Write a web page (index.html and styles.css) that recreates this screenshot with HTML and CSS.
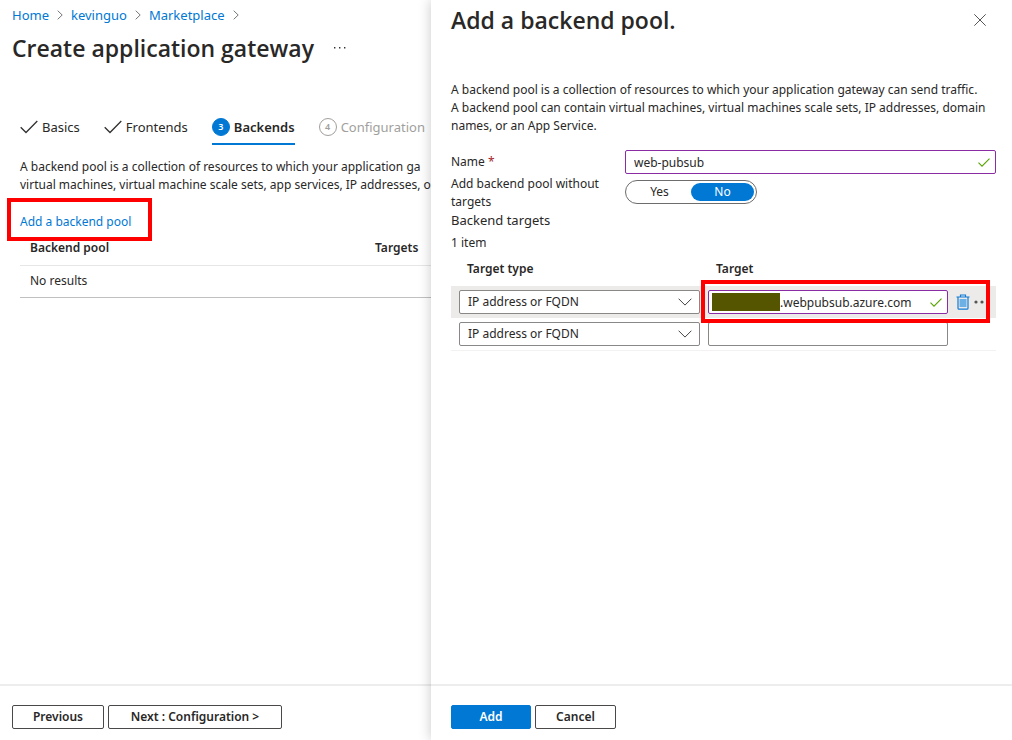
FILE: index.html
```html
<!DOCTYPE html>
<html lang="en">
<head>
<meta charset="utf-8">
<title>Create application gateway</title>
<link rel="stylesheet" href="styles.css">
</head>
<body>
<div class="shell">
  <main class="blade">
    <nav class="crumbs" aria-label="Breadcrumb">
      <a href="#">Home</a>
      <svg class="crumb-sep" viewBox="0 0 6 10"><path d="M.7.7 5.2 5 .7 9.3"/></svg>
      <a href="#">kevinguo</a>
      <svg class="crumb-sep" viewBox="0 0 6 10"><path d="M.7.7 5.2 5 .7 9.3"/></svg>
      <a href="#">Marketplace</a>
      <svg class="crumb-sep" viewBox="0 0 6 10"><path d="M.7.7 5.2 5 .7 9.3"/></svg>
    </nav>
    <header class="title-row">
      <h1 class="title">Create application gateway</h1>
      <button class="more" type="button" aria-label="More"><svg width="12" height="2" viewBox="0 0 12 2"><path d="M0 0h1.4v1.4H0zM5 0h1.4v1.4H5zM10 0h1.4v1.4H10z" fill="#333"/></svg></button>
    </header>
    <div class="steps" role="tablist">
      <button class="step" role="tab" type="button"><svg class="tick" viewBox="0 0 18 14"><path d="M.7 7.2 6 12.5 17.3 1"/></svg>Basics</button>
      <button class="step" role="tab" type="button"><svg class="tick" viewBox="0 0 18 14"><path d="M.7 7.2 6 12.5 17.3 1"/></svg>Frontends</button>
      <button class="step step-current" role="tab" type="button" aria-selected="true"><span class="num">3</span>Backends</button>
      <button class="step step-todo" role="tab" type="button"><span class="num">4</span>Configuration</button>
    </div>
    <div class="content">
      <p class="intro">A backend pool is a collection of resources to which your application ga<br>virtual machines, virtual machine scale sets, app services, IP addresses, o</p>
      <div class="add-link"><a href="#">Add a backend pool</a><span class="callout callout-link"></span></div>
      <table class="pools">
        <thead><tr><th>Backend pool</th><th class="pools-targets">Targets</th></tr></thead>
        <tbody><tr><td colspan="2">No results</td></tr></tbody>
      </table>
    </div>
    <footer class="footer">
      <button class="btn btn-prev" type="button">Previous</button>
      <button class="btn btn-next" type="button">Next : Configuration &gt;</button>
    </footer>
  </main>

  <aside class="panel">
    <header class="panel-head">
      <h2 class="title">Add a backend pool.</h2>
      <button class="close" type="button" aria-label="Close"><svg width="12" height="12" viewBox="0 0 12 12"><path d="M.3.3l11.4 11.4M11.7.3.3 11.7"/></svg></button>
    </header>
    <div class="panel-body">
      <p class="panel-intro">A backend pool is a collection of resources to which your application gateway can send traffic.<br>A backend pool can contain virtual machines, virtual machines scale sets, IP addresses, domain names, or an App Service.</p>
      <div class="field">
        <label class="field-label" for="name">Name <span class="req">*</span></label>
        <div class="box box-edited"><input id="name" type="text" value="web-pubsub"><svg class="valid" viewBox="0 0 12 9"><path d="M.5 4.7 4 8.2 11.5.6"/></svg></div>
      </div>
      <div class="field field-toggle">
        <span class="field-label" id="without">Add backend pool without targets</span>
        <div class="toggle" role="radiogroup" aria-labelledby="without">
          <button class="opt" type="button" role="radio" aria-checked="false">Yes</button>
          <button class="opt opt-on" type="button" role="radio" aria-checked="true">No</button>
        </div>
      </div>
      <h3 class="sub">Backend targets</h3>
      <p class="count">1 item</p>
      <table class="targets">
        <thead><tr><th class="col-type">Target type</th><th class="col-target">Target</th><th class="col-act"></th></tr></thead>
        <tbody>
          <tr class="active">
            <td><div class="pick"><select aria-label="Target type"><option>IP address or FQDN</option></select><svg class="chev" viewBox="0 0 14 8"><path d="M.6.7 7 7.1 13.4.7"/></svg></div></td>
            <td><div class="box box-target"><span class="redacted"></span><input type="text" aria-label="Target" value=".webpubsub.azure.com"><svg class="valid" viewBox="0 0 12 9"><path d="M.5 4.7 4 8.2 11.5.6"/></svg></div></td>
            <td class="acts">
              <div class="acts-row">
                <button class="icon-btn" type="button" aria-label="Delete"><svg width="14" height="16" viewBox="0 0 14 16"><path d="M3.5 5h7v8h-7z" fill="#6cb0e4"/><path d="M.5 3h13M4.5 3V1h5v2M2 3v11.2q0 1 1 1h8q1 0 1-1V3" fill="none" stroke="#0f7bd6" stroke-width="1.2"/></svg></button>
                <button class="icon-btn" type="button" aria-label="More"><svg width="16" height="4" viewBox="0 0 16 4"><circle cx="2" cy="2" r="1.6"/><circle cx="8" cy="2" r="1.6"/><circle cx="14" cy="2" r="1.6"/></svg></button>
              </div>
              <span class="callout callout-target"></span>
            </td>
          </tr>
          <tr>
            <td><div class="pick"><select aria-label="Target type"><option>IP address or FQDN</option></select><svg class="chev" viewBox="0 0 14 8"><path d="M.6.7 7 7.1 13.4.7"/></svg></div></td>
            <td><div class="box"><input type="text" aria-label="Target"></div></td>
            <td></td>
          </tr>
        </tbody>
      </table>
    </div>
    <footer class="footer panel-footer">
      <button class="btn btn-primary" type="button">Add</button>
      <button class="btn btn-cancel" type="button">Cancel</button>
    </footer>
  </aside>
</div>
</body>
</html>
```

FILE: styles.css
```css
* { box-sizing: border-box; }

body {
  margin: 0;
  background: #fff;
  color: #292827;
  font: 12px/18px "Noto Sans", "Open Sans", sans-serif;
}

h1, h2, h3, p { margin: 0; font-weight: 400; font-size: inherit; }
a { color: #0078d4; text-decoration: none; }
button, input, select { font: inherit; color: inherit; margin: 0; }
button { background: none; border: 0; padding: 0; white-space: nowrap; }
svg { display: block; flex: none; }
table { width: 100%; border-collapse: collapse; table-layout: fixed; }
th, td { padding: 0; text-align: left; }
th { font-weight: 600; }

.shell {
  display: grid;
  grid-template-columns: minmax(0, 431fr) minmax(0, 581fr);
  min-height: 100vh;
}

.blade, .panel { display: flex; flex-direction: column; }
.blade { overflow: hidden; }
.panel {
  position: relative;
  background: #fff;
  box-shadow: 0 0 12px rgba(0, 0, 0, .22);
}

.crumbs { display: flex; align-items: center; gap: 8px; height: 30px; padding-left: 12px; font-size: 13px; }
.crumb-sep { width: 6px; height: 10px; fill: none; stroke: #777; }
.title { font-family: "Open Sans", "Noto Sans", sans-serif; font-size: 23px; line-height: 36px; font-weight: 600; white-space: nowrap; }
.title-row { display: flex; align-items: center; gap: 20px; padding-left: 12px; }

.steps { display: flex; gap: 24px; margin-top: 44px; padding-left: 20px; font-size: 13px; }
.step { display: flex; align-items: center; gap: 4px; height: 35px; border-bottom: 2px solid transparent; }
.step-current { font-weight: 600; border-color: #0078d4; }
.step-todo { color: #a19f9d; }
.tick { width: 18px; height: 14px; fill: none; stroke: #323130; stroke-width: 1.3; }
.num {
  width: 18px; height: 18px;
  border: 1px solid #a19f9d; border-radius: 50%;
  font-size: 9px; line-height: 16px; font-weight: 600;
}
.step-current .num { background: #0078d4; border-color: #0078d4; color: #fff; }

.content { flex: 1; padding: 13px 0 0 20px; }
.intro { white-space: nowrap; }
.add-link { position: relative; width: fit-content; margin-top: 19px; }

.callout { position: absolute; border: 4px solid #f00; pointer-events: none; }
.callout-link { inset: -15px -21px -10px -13px; }

.pools { margin-top: 8px; }
.pools th { height: 26px; padding-left: 10px; vertical-align: top; border-bottom: 1px solid #e6e6e6; }
.pools td { height: 32px; padding-left: 10px; border-bottom: 1px solid #c0c0c0; }
.pools .pools-targets { width: 66px; }

.footer { display: flex; gap: 4px; height: 56px; padding: 19px 12px 0; border-top: 2px solid #ededed; }
.panel-footer { padding-left: 20px; }
.btn { height: 24px; border: 1px solid #4a4948; border-radius: 2px; font-weight: 600; line-height: 20px; }
.btn-prev { width: 92px; }
.btn-next { width: 174px; }
.btn-primary { width: 80px; background: #0078d4; border-color: #0078d4; color: #fff; }
.btn-cancel { width: 81px; }

.panel-head { display: flex; align-items: center; justify-content: space-between; height: 40px; padding: 0 26px 0 20px; }
.close svg { stroke: #555; fill: none; }
.panel-body { flex: 1; padding: 41px 16px 0 20px; }

.field { display: flex; align-items: center; margin-top: 15px; }
.field-label { width: 174px; flex: none; padding-right: 16px; }
.req { color: #a4262c; }
.box {
  display: flex; align-items: center; flex: 1;
  height: 24px; padding-right: 5px;
  background: #fff; border: 1px solid #8a8886; border-radius: 2px;
}
.box input { flex: 1; min-width: 0; width: 100%; height: 20px; border: 0; outline: 0; padding: 0 0 0 8px; background: none; }
.box-edited, .box-target { border-color: #8a2da5; }
.valid { width: 12px; height: 9px; fill: none; stroke: #57a300; stroke-width: 1.1; }
.box-target { padding-left: 3px; }
.box-target input { padding: 0; }
.redacted { width: 68px; height: 18px; background: #555500; flex: none; }

.field-toggle { margin-top: 1px; align-items: flex-start; }
.toggle { display: flex; margin-top: 5px; padding: 2px; width: 132px; height: 24px; border: 1px solid #6e6d6c; border-radius: 12px; }
.opt { flex: 1; line-height: 18px; border-radius: 9px; }
.opt-on { background: #0078d4; color: #fff; }
.sub { font-size: 13px; }
.count { margin-top: 5px; }

.targets { margin-top: 8px; }
.targets th { height: 26px; padding-left: 16px; vertical-align: top; }
.targets .col-target { padding-left: 16px; }
.col-type { width: 249px; }
.col-target { width: 248px; }
.targets td { height: 32px; padding-left: 8px; }
.targets tbody tr:last-child { border-bottom: 1px solid #f3f2f1; }
.active { background: #edebe9; }
.pick { position: relative; }
.pick select {
  display: block; width: 100%; height: 24px; padding: 0 24px 0 8px;
  appearance: none; background: #fff; border: 1px solid #8a8886; border-radius: 2px;
}
.chev { position: absolute; right: 8px; top: 8px; width: 14px; height: 8px; fill: none; stroke: #444; pointer-events: none; }
.targets .acts { position: relative; }
.acts-row { display: flex; align-items: center; gap: 4px; fill: #555; overflow: hidden; }
.callout-target { inset: -6px 6px -5px -247px; }
```
